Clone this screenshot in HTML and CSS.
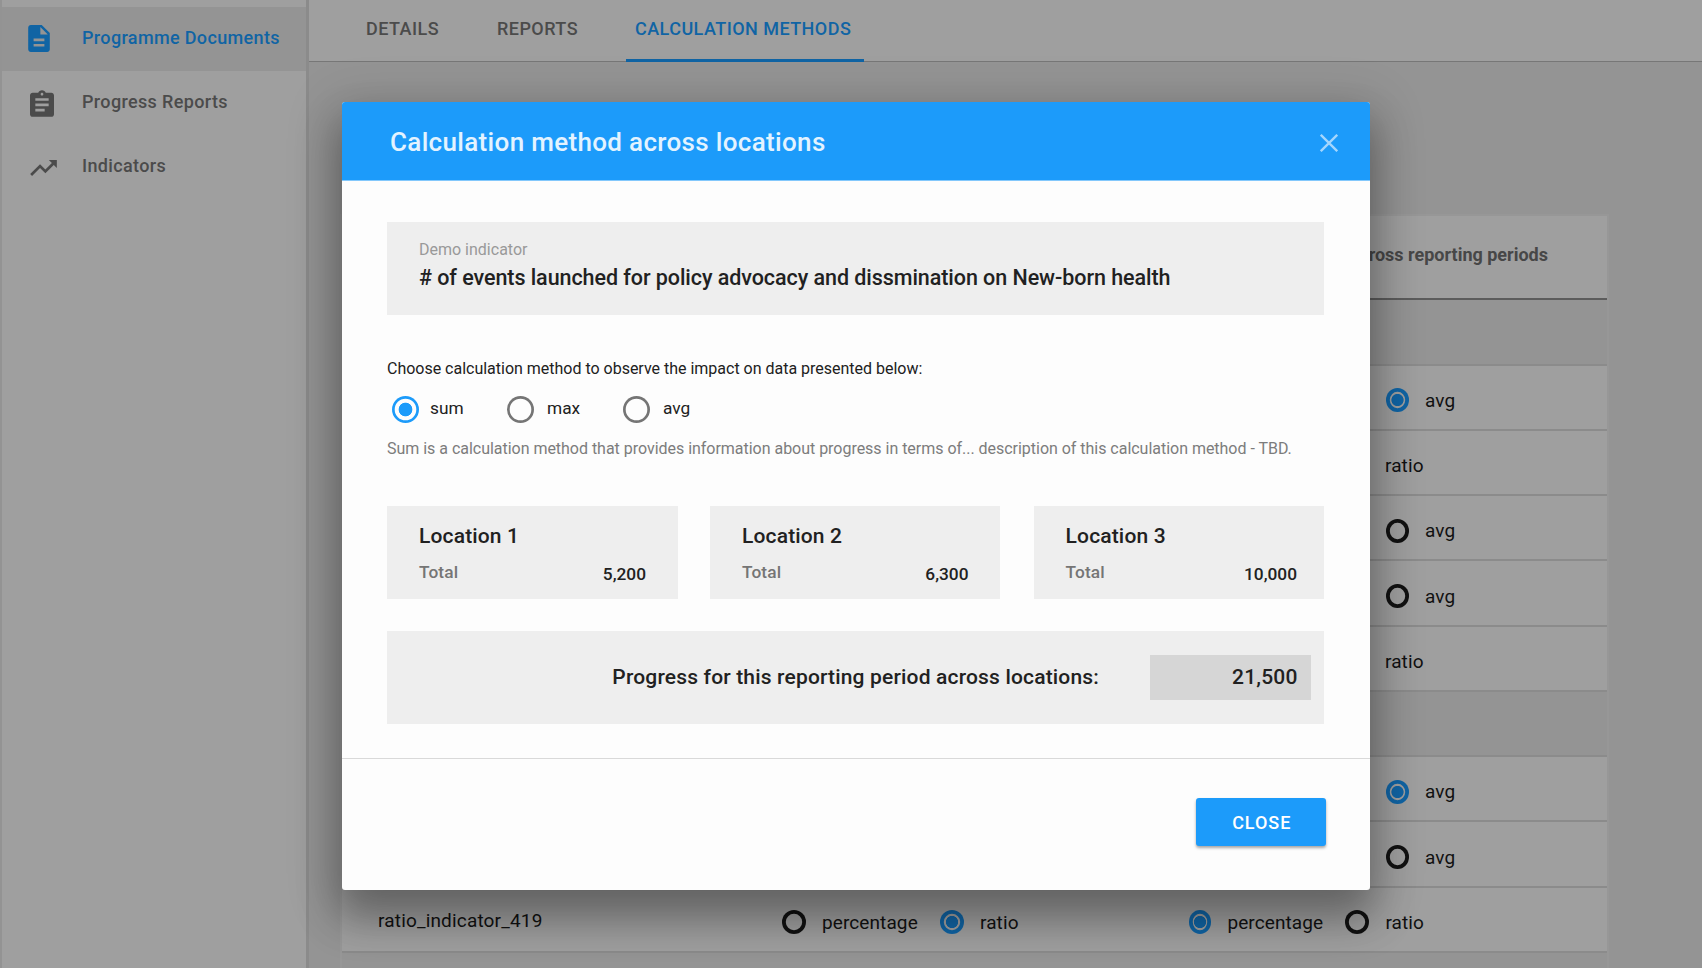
FILE: index.html
```html
<!DOCTYPE html>
<html lang="en">
<head>
<meta charset="utf-8">
<title>Calculation methods</title>
<link rel="stylesheet" href="styles.css">
</head>
<body>
<div class="app">
  <nav class="sidebar">
    <a class="nav-item active"><svg class="nav-icon doc" viewBox="4 2 16 20"><path d="M14 2H6c-1.100 0-2 .9-2 2v16c0 1.100.9 2 2 2h12c1.100 0 2-.9 2-2V8l-6-6zm2 16H8v-2h8v2zm0-4H8v-2h8v2zm-3-5V3.500L18.500 9H13z"/></svg><span class="nav-label docs">Programme Documents</span></a>
    <a class="nav-item"><svg class="nav-icon clip" viewBox="3 1 18 20"><path d="M19 3h-4.180C14.400 1.840 13.300 1 12 1c-1.300 0-2.400.84-2.820 2H5c-1.100 0-2 .9-2 2v14c0 1.100.9 2 2 2h14c1.100 0 2-.9 2-2V5c0-1.100-.9-2-2-2zm-7 0c.55 0 1 .45 1 1s-.45 1-1 1-1-.45-1-1 .45-1 1-1zm2 14H7v-2h7v2zm3-4H7v-2h10v2zm0-4H7V7h10v2z"/></svg><span class="nav-label">Progress Reports</span></a>
    <a class="nav-item"><svg class="nav-icon trend" viewBox="2 6 20 12"><path d="M16 6l2.290 2.290-4.880 4.880-4-4L2 16.590 3.410 18l6-6 4 4 6.300-6.290L22 12V6z"/></svg><span class="nav-label">Indicators</span></a>
  </nav>
  <main class="main">
    <div class="tabs">
      <a class="tab details">DETAILS</a>
      <a class="tab reports">REPORTS</a>
      <a class="tab methods active">CALCULATION METHODS</a>
    </div>
    <section class="table">
      <div class="thead"><span>Calculation method across reporting periods</span></div>
      <div class="row group"></div>
      <div class="row"><div class="period avg-only"><i class="radio narrow on"></i><span>avg</span></div></div>
      <div class="row"><div class="period ratio-only"><span>ratio</span></div></div>
      <div class="row"><div class="period avg-only"><i class="radio narrow"></i><span>avg</span></div></div>
      <div class="row"><div class="period avg-only"><i class="radio narrow"></i><span>avg</span></div></div>
      <div class="row"><div class="period ratio-only"><span>ratio</span></div></div>
      <div class="row group"></div>
      <div class="row"><div class="period avg-only"><i class="radio narrow on"></i><span>avg</span></div></div>
      <div class="row"><div class="period avg-only"><i class="radio narrow"></i><span>avg</span></div></div>
      <div class="row">
        <div class="name">ratio_indicator_419</div>
        <div class="location"><i class="radio"></i><span class="pct">percentage</span><i class="radio on"></i><span>ratio</span></div>
        <div class="period last-period"><i class="radio narrow on"></i><span class="pct">percentage</span><i class="radio"></i><span>ratio</span></div>
      </div>
      <div class="row group"></div>
    </section>
  </main>
</div>
<div class="modal">
  <header class="modal-head">
    <h1>Calculation method across locations</h1>
    <svg class="x" viewBox="0 0 18 18"><path d="M0.800 0.800L17.200 17.200M17.200 0.800L0.800 17.200"/></svg>
  </header>
  <div class="modal-body">
    <div class="indicator">
      <div class="caption">Demo indicator</div>
      <div class="indicator-title"># of events launched for policy advocacy and dissmination on New-born health</div>
    </div>
    <p class="prompt">Choose calculation method to observe the impact on data presented below:</p>
    <div class="choices">
      <label class="choice c1"><i class="dot on"></i><span>sum</span></label>
      <label class="choice c2"><i class="dot"></i><span>max</span></label>
      <label class="choice"><i class="dot"></i><span>avg</span></label>
    </div>
    <p class="hint">Sum is a calculation method that provides information about progress in terms of... description of this calculation method - TBD.</p>
    <div class="cards">
      <div class="card"><h2>Location 1</h2><div class="line"><span class="total">Total</span><b>5,200</b></div></div>
      <div class="card"><h2>Location 2</h2><div class="line"><span class="total">Total</span><b>6,300</b></div></div>
      <div class="card last"><h2>Location 3</h2><div class="line"><span class="total">Total</span><b>10,000</b></div></div>
    </div>
    <div class="progress">
      <span class="progress-label">Progress for this reporting period across locations:</span>
      <span class="progress-value">21,500</span>
    </div>
  </div>
  <footer class="modal-foot"><button class="close">CLOSE</button></footer>
</div>
</body>
</html>
```
FILE: styles.css
```css
* { box-sizing: border-box; }
body { margin: 0; width: 1702px; height: 968px; overflow: hidden; position: relative; background: #949494; font-family: Roboto, "Liberation Sans", sans-serif; color: #111; }
h1, h2, p { margin: 0; font-weight: 500; }
span, h1, h2, p, a { white-space: nowrap; }
i { display: block; flex: none; border-radius: 50%; }

.app { display: flex; height: 968px; overflow: hidden; }
.sidebar { width: 309px; flex: none; background: #9f9f9f; border-left: 2px solid #939393; border-right: 3px solid #8b8b8b; padding-top: 7px; }
.nav-item { display: flex; align-items: center; height: 64px; color: #4b4b4b; font-size: 18px; font-weight: 500; letter-spacing: .35px; }
.nav-item.active { background: #949494; color: #1064a4; }
.nav-label { padding-bottom: 3px; }
.nav-icon { flex: none; fill: currentColor; }
.doc { width: 22px; height: 27px; margin: 0 32px 2px 26px; }
.clip { width: 24px; height: 27px; margin: 0 28px 0 28px; }
.trend { width: 27px; height: 16px; margin: 1px 25px 0 28px; }

.main { flex: 1; min-width: 0; }
.tabs { display: flex; height: 62px; background: #9f9f9f; border-bottom: 1px solid #777; padding-left: 48px; }
.tab { height: 62px; padding: 0 9px; line-height: 58px; font-size: 18px; font-weight: 500; color: #4b4b4b; letter-spacing: .45px; }
.details { width: 131px; }
.reports { width: 138px; }
.methods { width: 238px; }
.tab.active { color: #1064a4; border-bottom: 3px solid #1064a4; }

.table { width: 1265px; margin: 154px 0 0 33px; background: #9f9f9f; box-shadow: 0 0 0 2px #979797; }
.thead { height: 84.400px; border-bottom: 2px solid #5c5c5c; display: flex; justify-content: flex-end; align-items: center; padding: 0 59px 6px 0; color: #474747; font-size: 18px; font-weight: 700; }
.row { height: 65.250px; border-bottom: 2px solid #8b8b8b; display: grid; grid-template-columns: 404px 442px 1fr; align-items: center; padding-top: 6px; font-size: 19px; letter-spacing: .1px; }
.group { background: #949494; }
.name { grid-column: 1; padding: 0 0 4px 36px; letter-spacing: .17px; }
.location { grid-column: 2; display: flex; align-items: center; padding-left: 36px; }
.period { grid-column: 3; display: flex; align-items: center; }
.last-period { padding-left: .7px; }
.avg-only { padding-left: 198.300px; }
.ratio-only { padding-left: 197px; }
.radio { width: 24px; height: 24px; box-shadow: inset 0 0 0 3.800px #111; margin-right: 16px; }
.radio.on { box-shadow: inset 0 0 0 3.800px #1064a4; background: radial-gradient(circle, #1064a4 5.700px, transparent 6.500px); }
.radio.narrow { width: 22.700px; }
.pct { width: 118px; }

.modal { position: absolute; left: 342px; top: 102px; width: 1027.700px; height: 787.700px; display: flex; flex-direction: column; border-radius: 3px; background: #fdfdfd; box-shadow: 0 26px 41px 3px rgba(0,0,0,.29), 0 10px 50px 9px rgba(0,0,0,.15); color: #212121; }
.modal-head { height: 79px; flex: none; background: #1c9bfa; border-bottom: 1px solid #83c8fc; border-radius: 3px 3px 0 0; display: flex; align-items: center; justify-content: space-between; padding: 2px 31.700px 0 48px; }
h1 { font-size: 26px; color: #e3f3ff; letter-spacing: .33px; }
.x { width: 18px; height: 18px; fill: none; stroke: #a4d6fd; stroke-width: 2.300; margin-top: 1px; }
.modal-body { height: 578px; flex: none; padding: 41px 45.700px 0 45px; border-bottom: 1px solid #d9d9d9; }
.indicator { height: 93px; background: #eee; padding: 17px 0 0 32px; }
.caption { font-size: 16px; line-height: 22px; color: #999; }
.indicator-title { font-size: 21.500px; line-height: 34px; font-weight: 500; letter-spacing: -.06px; }
.prompt { font-size: 16px; line-height: 20px; margin-top: 44px; font-weight: 400; letter-spacing: -.01px; }
.choices { display: flex; height: 27px; margin-top: 17px; padding-left: 5px; }
.choice { display: flex; align-items: center; font-size: 17.300px; }
.choice span { padding-bottom: 3px; }
.c1 { width: 115px; }
.c2 { width: 116px; }
.dot { width: 27px; height: 27px; box-shadow: inset 0 0 0 2.700px #757575; margin-right: 13px; }
.c1 .dot { margin-right: 11px; }
.dot.on { box-shadow: inset 0 0 0 2.700px #1c9bfa; background: radial-gradient(circle, #1c9bfa 6.500px, transparent 7.200px); }
.hint { font-size: 16px; line-height: 20px; margin-top: 16px; font-weight: 400; color: #7c7c7c; letter-spacing: -.025px; }
.cards { display: grid; grid-template-columns: 291px 290px 291px; column-gap: 32px; margin-top: 47px; }
.card { height: 93px; background: #eee; padding: 16px 32px 0; }
.card:nth-child(2) { padding-right: 31.500px; }
.card.last { margin: 0 -1px 0 1.600px; padding-right: 27px; }
h2 { font-size: 21px; line-height: 28px; letter-spacing: .15px; }
.line { display: flex; justify-content: space-between; font-size: 17.300px; line-height: 24px; margin-top: 12px; }
.total { color: #757575; font-weight: 500; margin-top: -2px; letter-spacing: .1px; }
b { font-weight: 500; }
.progress { height: 93px; margin-top: 32px; background: #eee; display: flex; align-items: center; justify-content: flex-end; padding-right: 13px; font-size: 21px; font-weight: 500; letter-spacing: .17px; }
.progress-label { margin-right: 51px; padding-bottom: 1px; }
.progress-value { width: 161px; height: 45px; background: #d6d6d6; line-height: 44px; text-align: right; padding-right: 13.500px; }
.modal-foot { flex: 1; display: flex; justify-content: flex-end; padding: 39px 44px 0; }
.close { width: 130px; height: 48px; border: 0; border-radius: 3px; padding: 0 0 0 2px; background: #1c9bfa; color: #fff; font: 500 18px Roboto, sans-serif; letter-spacing: .95px; box-shadow: 0 2px 3px rgba(0,0,0,.35); }
```
